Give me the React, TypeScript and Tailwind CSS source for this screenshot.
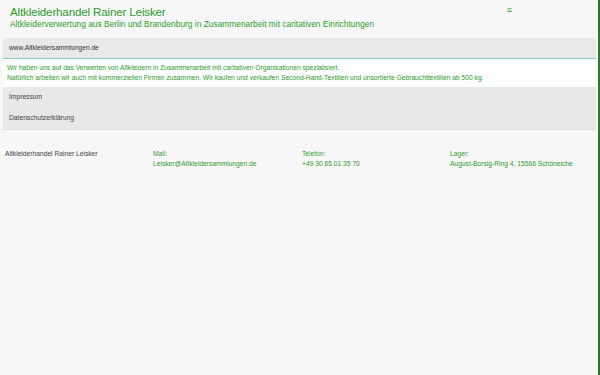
import React from 'react';

const green = 'text-[#2f9a2f]';

export default function App() {
  return (
    <div className="min-h-[375px] w-[600px] bg-[#f7f7f7] border-r-2 border-[#2d7a2d] font-['Liberation_Sans',Arial,sans-serif]">
      <div className="w-[596px]">
        {/* Kopfzeile */}
        <header className="flex justify-between pl-[10px] pr-[84px] pt-[5px] h-[38px]">
          <div>
            <h1 className={`text-[11.7px] leading-[14px] tracking-[-0.2px] ${green}`}>Altkleiderhandel Rainer Leisker</h1>
            <p className={`text-[8.4px] leading-[10px] ${green}`}>
              Altkleiderverwertung aus Berlin und Brandenburg in Zusammenarbeit mit caritativen Einrichtungen
            </p>
          </div>
          <span className={`text-[9px] leading-[10px] font-bold ${green}`}>≡</span>
        </header>

        {/* Inhalt */}
        <main className="ml-[3px] border-b border-[#dcdcdc]">
          <div className="bg-[#e9e9e9] h-[20px] flex items-center pl-[6px] text-[6.6px] text-[#333]">
            www.Altkleidersammlungen.de
          </div>
          <div className={`bg-[#fcfefe] border-t border-[#8fc8cc] pt-[4px] pb-[4px] pl-[4px] text-[6.7px] leading-[10px] ${green}`}>
            <p>Wir haben uns auf das Verwerten von Altkleidern in Zusammenarbeit mit caritativen Organisationen spezialisiert.</p>
            <p>Natürlich arbeiten wir auch mit kommerziellen Firmen zusammen. Wir kaufen und verkaufen Second-Hand-Textilien und unsortierte Gebrauchttextilien ab 500 kg.</p>
          </div>
          <nav className="bg-[#e8e8e8] text-[6.7px] text-[#444] pl-[6px]">
            <div className="h-[20px] flex items-center">Impressum</div>
            <div className="h-[22px] flex items-center">Datenschutzerklärung</div>
          </nav>
        </main>

        {/* Fußzeile */}
        <footer className="grid grid-cols-[148px_149px_148px_1fr] pl-[5px] pt-[19px] text-[6.7px] leading-[10px]">
          <div className="text-[#444]">Altkleiderhandel Rainer Leisker</div>
          <div className={green}>
            <p>Mail:</p>
            <p>Leisker@Altkleidersammlungen.de</p>
          </div>
          <div className={green}>
            <p>Telefon:</p>
            <p>+49 30 65 01 35 70</p>
          </div>
          <div className={green}>
            <p>Lager:</p>
            <p>August-Borsig-Ring 4, 15566 Schöneiche</p>
          </div>
        </footer>
      </div>
    </div>
  );
}
